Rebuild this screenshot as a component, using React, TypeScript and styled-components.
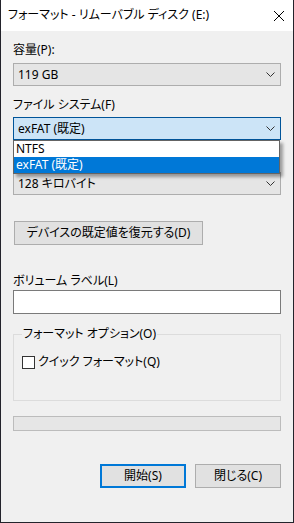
import styled, { createGlobalStyle, css } from "styled-components";

const GlobalStyle = createGlobalStyle`
  html, body {
    margin: 0;
    padding: 0;
    background: #f0f0f0;
  }
  body {
    font-family: "Noto Sans", "Noto Sans CJK JP", sans-serif;
    font-size: 12px;
    color: #000;
    font-feature-settings: "palt";
  }
  * {
    box-sizing: border-box;
  }
`;

const Window = styled.div`
  width: 294px;
  height: 523px;
  border: 1px solid #23232b;
  border-top: none;
  background: #f0f0f0;
  display: flex;
  flex-direction: column;
`;

const TitleBar = styled.div`
  height: 31px;
  background: #fff;
  display: flex;
  align-items: center;
  justify-content: space-between;
  padding: 0 9px 0 7px;
`;

const Title = styled.span`
  line-height: 16px;
  margin-top: -1px;
`;

const Body = styled.div`
  display: flex;
  flex-direction: column;
  padding: 0 12px;
`;

const Label = styled.div<{ $mt: number; $mb: number }>`
  height: 16px;
  line-height: 16px;
  white-space: nowrap;
  margin-top: ${({ $mt }) => $mt}px;
  margin-bottom: ${({ $mb }) => $mb}px;
`;

const ComboWrap = styled.div`
  position: relative;
`;

const Combo = styled.div<{ $focused?: boolean }>`
  height: 23px;
  display: flex;
  align-items: center;
  justify-content: space-between;
  padding: 0 3px 0 4px;
  border: 1px solid #adadad;
  background: #e5e5e5;
  ${({ $focused }) =>
    $focused &&
    css`
      border-color: #005499;
      background: #cce4f7;
    `}
`;

const ComboText = styled.span`
  line-height: 16px;
`;

const DropList = styled.div`
  position: absolute;
  top: 100%;
  left: 0;
  right: 1px;
  background: #fff;
  border: 1px solid #646464;
  box-shadow: 3px 3px 3px rgba(0, 0, 0, 0.35);
  z-index: 2;
`;

const Option = styled.div<{ $selected?: boolean }>`
  height: 16px;
  line-height: 16px;
  padding-left: 2px;
  background: ${({ $selected }) => ($selected ? "#0078d7" : "#fff")};
  color: ${({ $selected }) => ($selected ? "#fff" : "#000")};
`;

const Button = styled.button<{ $default?: boolean; $w: number }>`
  width: ${({ $w }) => $w}px;
  height: 24px;
  padding: 0;
  font: inherit;
  line-height: 16px;
  color: #000;
  background: #e1e1e1;
  border: 1px solid #adadad;
  ${({ $default }) =>
    $default &&
    css`
      border: 2px solid #0078d7;
    `}
`;

const RestoreButton = styled(Button)`
  margin-top: 26px;
  margin-left: 1px;
`;

const TextInput = styled.div`
  height: 24px;
  background: #fff;
  border: 1px solid #7a7a7a;
`;

const Group = styled.fieldset`
  margin: 12px 0 0;
  padding: 0 7px 30px 8px;
  border: 1px solid #dcdcdc;
  min-inline-size: auto;
`;

const Legend = styled.legend`
  padding: 0 1px;
  height: 16px;
  line-height: 16px;
`;

const CheckRow = styled.label`
  display: flex;
  align-items: center;
  gap: 3px;
  margin-top: 12px;
  height: 16px;
  line-height: 16px;
`;

const CheckBox = styled.span`
  width: 13px;
  height: 13px;
  background: #fff;
  border: 1px solid #333;
`;

const Progress = styled.div`
  margin-top: 15px;
  height: 15px;
  background: #e6e6e6;
  border: 1px solid #bcbcbc;
`;

const ButtonRow = styled.div`
  display: flex;
  justify-content: flex-end;
  gap: 9px;
  margin-top: 33px;
`;

function Chevron() {
  return (
    <svg width="9" height="5" viewBox="0 0 9 5" style={{ marginRight: 2 }}>
      <path d="M0.5 0.5 L4.5 4.5 L8.5 0.5" fill="none" stroke="#333" strokeWidth="1" />
    </svg>
  );
}

function CloseIcon() {
  return (
    <svg width="10" height="10" viewBox="0 0 10 10">
      <path d="M0 0 L10 10 M10 0 L0 10" stroke="#000" strokeWidth="1" />
    </svg>
  );
}

export default function App() {
  return (
    <>
      <GlobalStyle />
      <Window>
        <TitleBar>
          <Title>フォーマット - リムーバブル ディスク (E:)</Title>
          <CloseIcon />
        </TitleBar>

        <Body>
          <Label $mt={11} $mb={5}>容量(P):</Label>
          <Combo>
            <ComboText>119 GB</ComboText>
            <Chevron />
          </Combo>

          <Label $mt={11} $mb={4}>ファイル システム(F)</Label>
          <ComboWrap>
            <Combo $focused>
              <ComboText>exFAT (既定)</ComboText>
              <Chevron />
            </Combo>
            <DropList>
              <Option>NTFS</Option>
              <Option $selected>exFAT (既定)</Option>
            </DropList>
          </ComboWrap>

          {/* allocation unit label sits under the open list */}
          <Label $mt={11} $mb={5} aria-hidden />
          <Combo>
            <ComboText>128 キロバイト</ComboText>
            <Chevron />
          </Combo>

          <RestoreButton $w={189}>デバイスの既定値を復元する(D)</RestoreButton>

          <Label $mt={28} $mb={1}>ボリューム ラベル(L)</Label>
          <TextInput />

          <Group>
            <Legend>フォーマット オプション(O)</Legend>
            <CheckRow>
              <CheckBox />
              クイック フォーマット(Q)
            </CheckRow>
          </Group>

          <Progress />

          <ButtonRow>
            <Button $default $w={86}>開始(S)</Button>
            <Button $w={86}>閉じる(C)</Button>
          </ButtonRow>
        </Body>
      </Window>
    </>
  );
}
